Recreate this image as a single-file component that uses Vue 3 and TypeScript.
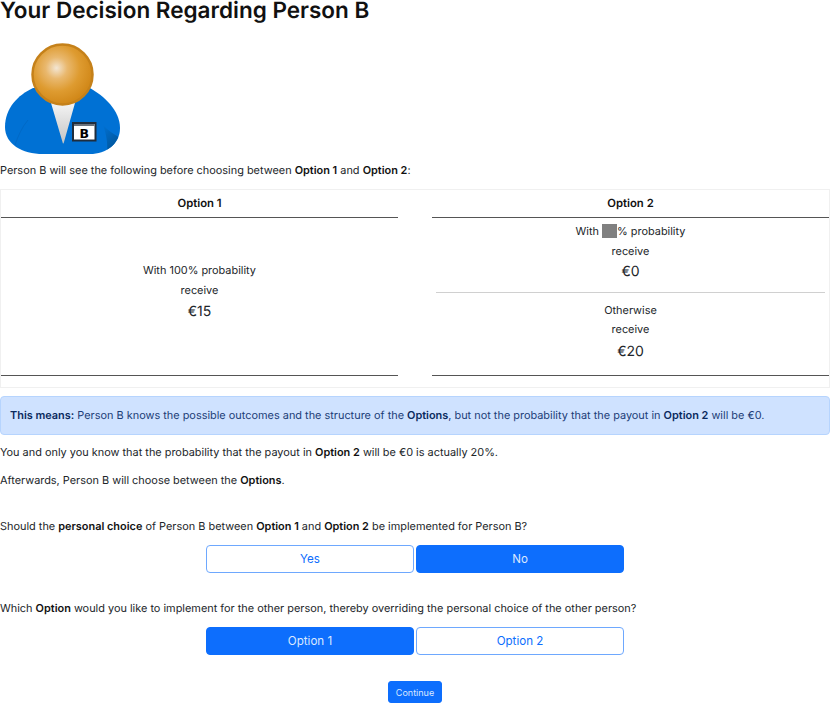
<script setup lang="ts">
import { ref } from 'vue';

const implement = ref('No');
const override = ref('Option 1');
</script>

<template>
  <div class="page">
    <h1>Your Decision Regarding Person B</h1>

    <svg class="avatar" width="130" height="116" viewBox="0 0 130 116">
      <defs>
        <radialGradient id="head" gradientUnits="userSpaceOnUse" cx="56.5" cy="25" r="36">
          <stop offset="0" stop-color="#f3e6d4" />
          <stop offset="0.3" stop-color="#e9b86e" />
          <stop offset="0.65" stop-color="#de9b30" />
          <stop offset="1" stop-color="#d2891a" />
        </radialGradient>
        <linearGradient id="shirt" x1="0" y1="0" x2="0" y2="1">
          <stop offset="0" stop-color="#f4f4f4" />
          <stop offset="1" stop-color="#c4c4c4" />
        </linearGradient>
        <linearGradient id="fold" x1="0" y1="0" x2="0.7" y2="1">
          <stop offset="0" stop-color="#0071d4" />
          <stop offset="1" stop-color="#00508f" />
        </linearGradient>
        <clipPath id="bodyClip">
          <path d="M33 45 C18 52 5 65 5 84 C5 101 22 111 43 111 L90 111 C106 111 120 101 120 85 C120 68 105 53 88 44 Z" />
        </clipPath>
      </defs>
      <path d="M33 45 C18 52 5 65 5 84 C5 101 22 111 43 111 L90 111 C106 111 120 101 120 85 C120 68 105 53 88 44 Z" fill="#0071d4" />
      <path d="M103 82 C106 91 108 98 107 111 L122 111 L122 96 C115 92 108 88 103 82 Z" fill="url(#fold)" clip-path="url(#bodyClip)" />
      <path d="M15 102 C18 93 22 84 28 77" fill="none" stroke="#0069c6" stroke-width="1" />
      <path d="M51 60 L75 60 L64 99 Q63.2 102 62.5 99 Z" fill="url(#shirt)" />
      <circle cx="62.5" cy="31.5" r="30" fill="url(#head)" stroke="#c5811a" stroke-width="2.5" />
      <rect x="73" y="80" width="22.5" height="17.5" fill="#fff" stroke="#1f2d3d" stroke-width="2" />
      <rect x="74" y="81" width="20.5" height="2" fill="#6a727c" />
      <text x="84.2" y="95" class="badge">B</text>
    </svg>

    <p class="intro">Person B will see the following before choosing between <b>Option 1</b> and <b>Option 2</b>:</p>

    <div class="options">
      <div class="col">
        <div class="col-head">Option 1</div>
        <div class="col-body">
          <div class="outcome">
            <div class="line">With 100% probability</div>
            <div class="line">receive</div>
            <div class="amount">€15</div>
          </div>
        </div>
      </div>
      <div class="col">
        <div class="col-head">Option 2</div>
        <div class="col-body split">
          <div class="outcome">
            <div class="line">With <span class="hidden-value"></span>% probability</div>
            <div class="line">receive</div>
            <div class="amount">€0</div>
          </div>
          <hr />
          <div class="outcome">
            <div class="line">Otherwise</div>
            <div class="line">receive</div>
            <div class="amount">€20</div>
          </div>
        </div>
      </div>
    </div>

    <div class="alert"><b>This means:</b> Person B knows the possible outcomes and the structure of the <b>Options</b>, but not the probability that the payout in <b>Option 2</b> will be €0.</div>

    <p class="know">You and only you know that the probability that the payout in <b>Option 2</b> will be €0 is actually 20%.</p>
    <p class="after">Afterwards, Person B will choose between the <b>Options</b>.</p>

    <p class="question first">Should the <b>personal choice</b> of Person B between <b>Option 1</b> and <b>Option 2</b> be implemented for Person B?</p>
    <div class="btn-group">
      <button v-for="o in ['Yes', 'No']" :key="o" :class="{ active: implement === o }" @click="implement = o">{{ o }}</button>
    </div>

    <p class="question second">Which <b>Option</b> would you like to implement for the other person, thereby overriding the personal choice of the other person?</p>
    <div class="btn-group">
      <button v-for="o in ['Option 1', 'Option 2']" :key="o" :class="{ active: override === o }" @click="override = o">{{ o }}</button>
    </div>

    <div class="footer">
      <button class="continue">Continue</button>
    </div>
  </div>
</template>

<style scoped>
.page {
  width: 830px;
  font-family: Inter, "Noto Sans", sans-serif;
  font-size: 10.92px;
  line-height: 17px;
  color: #212529;
  text-rendering: geometricPrecision;
}
h1 {
  margin: 0;
  font-size: 22.5px;
  line-height: 21px;
  font-weight: 600;
  color: #111;
}
.avatar {
  display: block;
  margin-top: 22px;
  margin-bottom: 3px;
}
.badge {
  font-family: "DejaVu Sans", sans-serif;
  font-size: 12.5px;
  font-weight: 700;
  text-anchor: middle;
  fill: #000;
}
p {
  margin: 0;
}
b {
  font-weight: 600;
  color: #111;
}
.intro {
  height: 17px;
}
.options {
  display: grid;
  grid-template-columns: 397px 397px;
  justify-content: space-between;
  height: 199px;
  margin-top: 10px;
  border: 1px solid #f0f0f0;
  box-sizing: border-box;
  padding-bottom: 11px;
}
.col {
  display: flex;
  flex-direction: column;
  border-bottom: 1px solid #555;
}
.col-head {
  height: 27px;
  line-height: 26px;
  text-align: center;
  font-size: 11.3px;
  font-weight: 600;
  color: #111;
  border-bottom: 1px solid #555;
}
.col-body {
  flex: 1;
  display: flex;
  flex-direction: column;
  justify-content: center;
  padding-bottom: 13px;
}
.col-body.split {
  justify-content: flex-start;
  padding: 3px 0 0;
}
.outcome {
  text-align: center;
}
.line {
  height: 20px;
  line-height: 20px;
}
.amount {
  font-size: 14px;
  height: 21px;
  line-height: 24px;
}
.split .amount {
  line-height: 22px;
}
.split hr + .outcome .line {
  height: 19px;
  line-height: 19px;
}
.split hr + .outcome .amount {
  height: 24px;
  line-height: 25px;
}
hr {
  border: 0;
  border-top: 1px solid #d0d0d0;
  margin: 10px 0 8px 4px;
  width: 389px;
}
.hidden-value {
  display: inline-block;
  width: 15px;
  height: 14px;
  background: #808080;
  vertical-align: -3px;
}
.alert {
  margin-top: 8px;
  height: 39px;
  box-sizing: border-box;
  padding: 10px 9px;
  background: #cfe2ff;
  border: 1px solid #b6d4fe;
  border-radius: 4px;
  color: #1c3d77;
}
.alert b {
  color: #0a2a5e;
}
.know {
  margin-top: 9px;
}
.after {
  margin-top: 11px;
}
.question {
  height: 17px;
}
.question.first {
  margin-top: 29px;
}
.question.second {
  margin-top: 27px;
}
.btn-group {
  display: flex;
  justify-content: center;
  gap: 2px;
  margin-top: 10px;
}
.btn-group button {
  width: 208px;
  height: 28px;
  box-sizing: border-box;
  font-family: inherit;
  font-size: 11.6px;
  color: #0d6efd;
  background: #fff;
  border: 1px solid #6ea8fe;
  border-radius: 4px;
  padding: 0;
}
.btn-group button.active {
  color: #dbe8ff;
  background: #0d6efd;
  border-color: #0d6efd;
}
.footer {
  display: flex;
  justify-content: center;
  margin-top: 26px;
}
.continue {
  width: 54px;
  height: 22px;
  box-sizing: border-box;
  padding: 0;
  font-family: inherit;
  font-size: 9px;
  color: #dbe8ff;
  background: #0d6efd;
  border: 1px solid #0d6efd;
  border-radius: 3px;
}
</style>

<style>
html, body {
  margin: 0;
  background: #fff;
}
</style>
